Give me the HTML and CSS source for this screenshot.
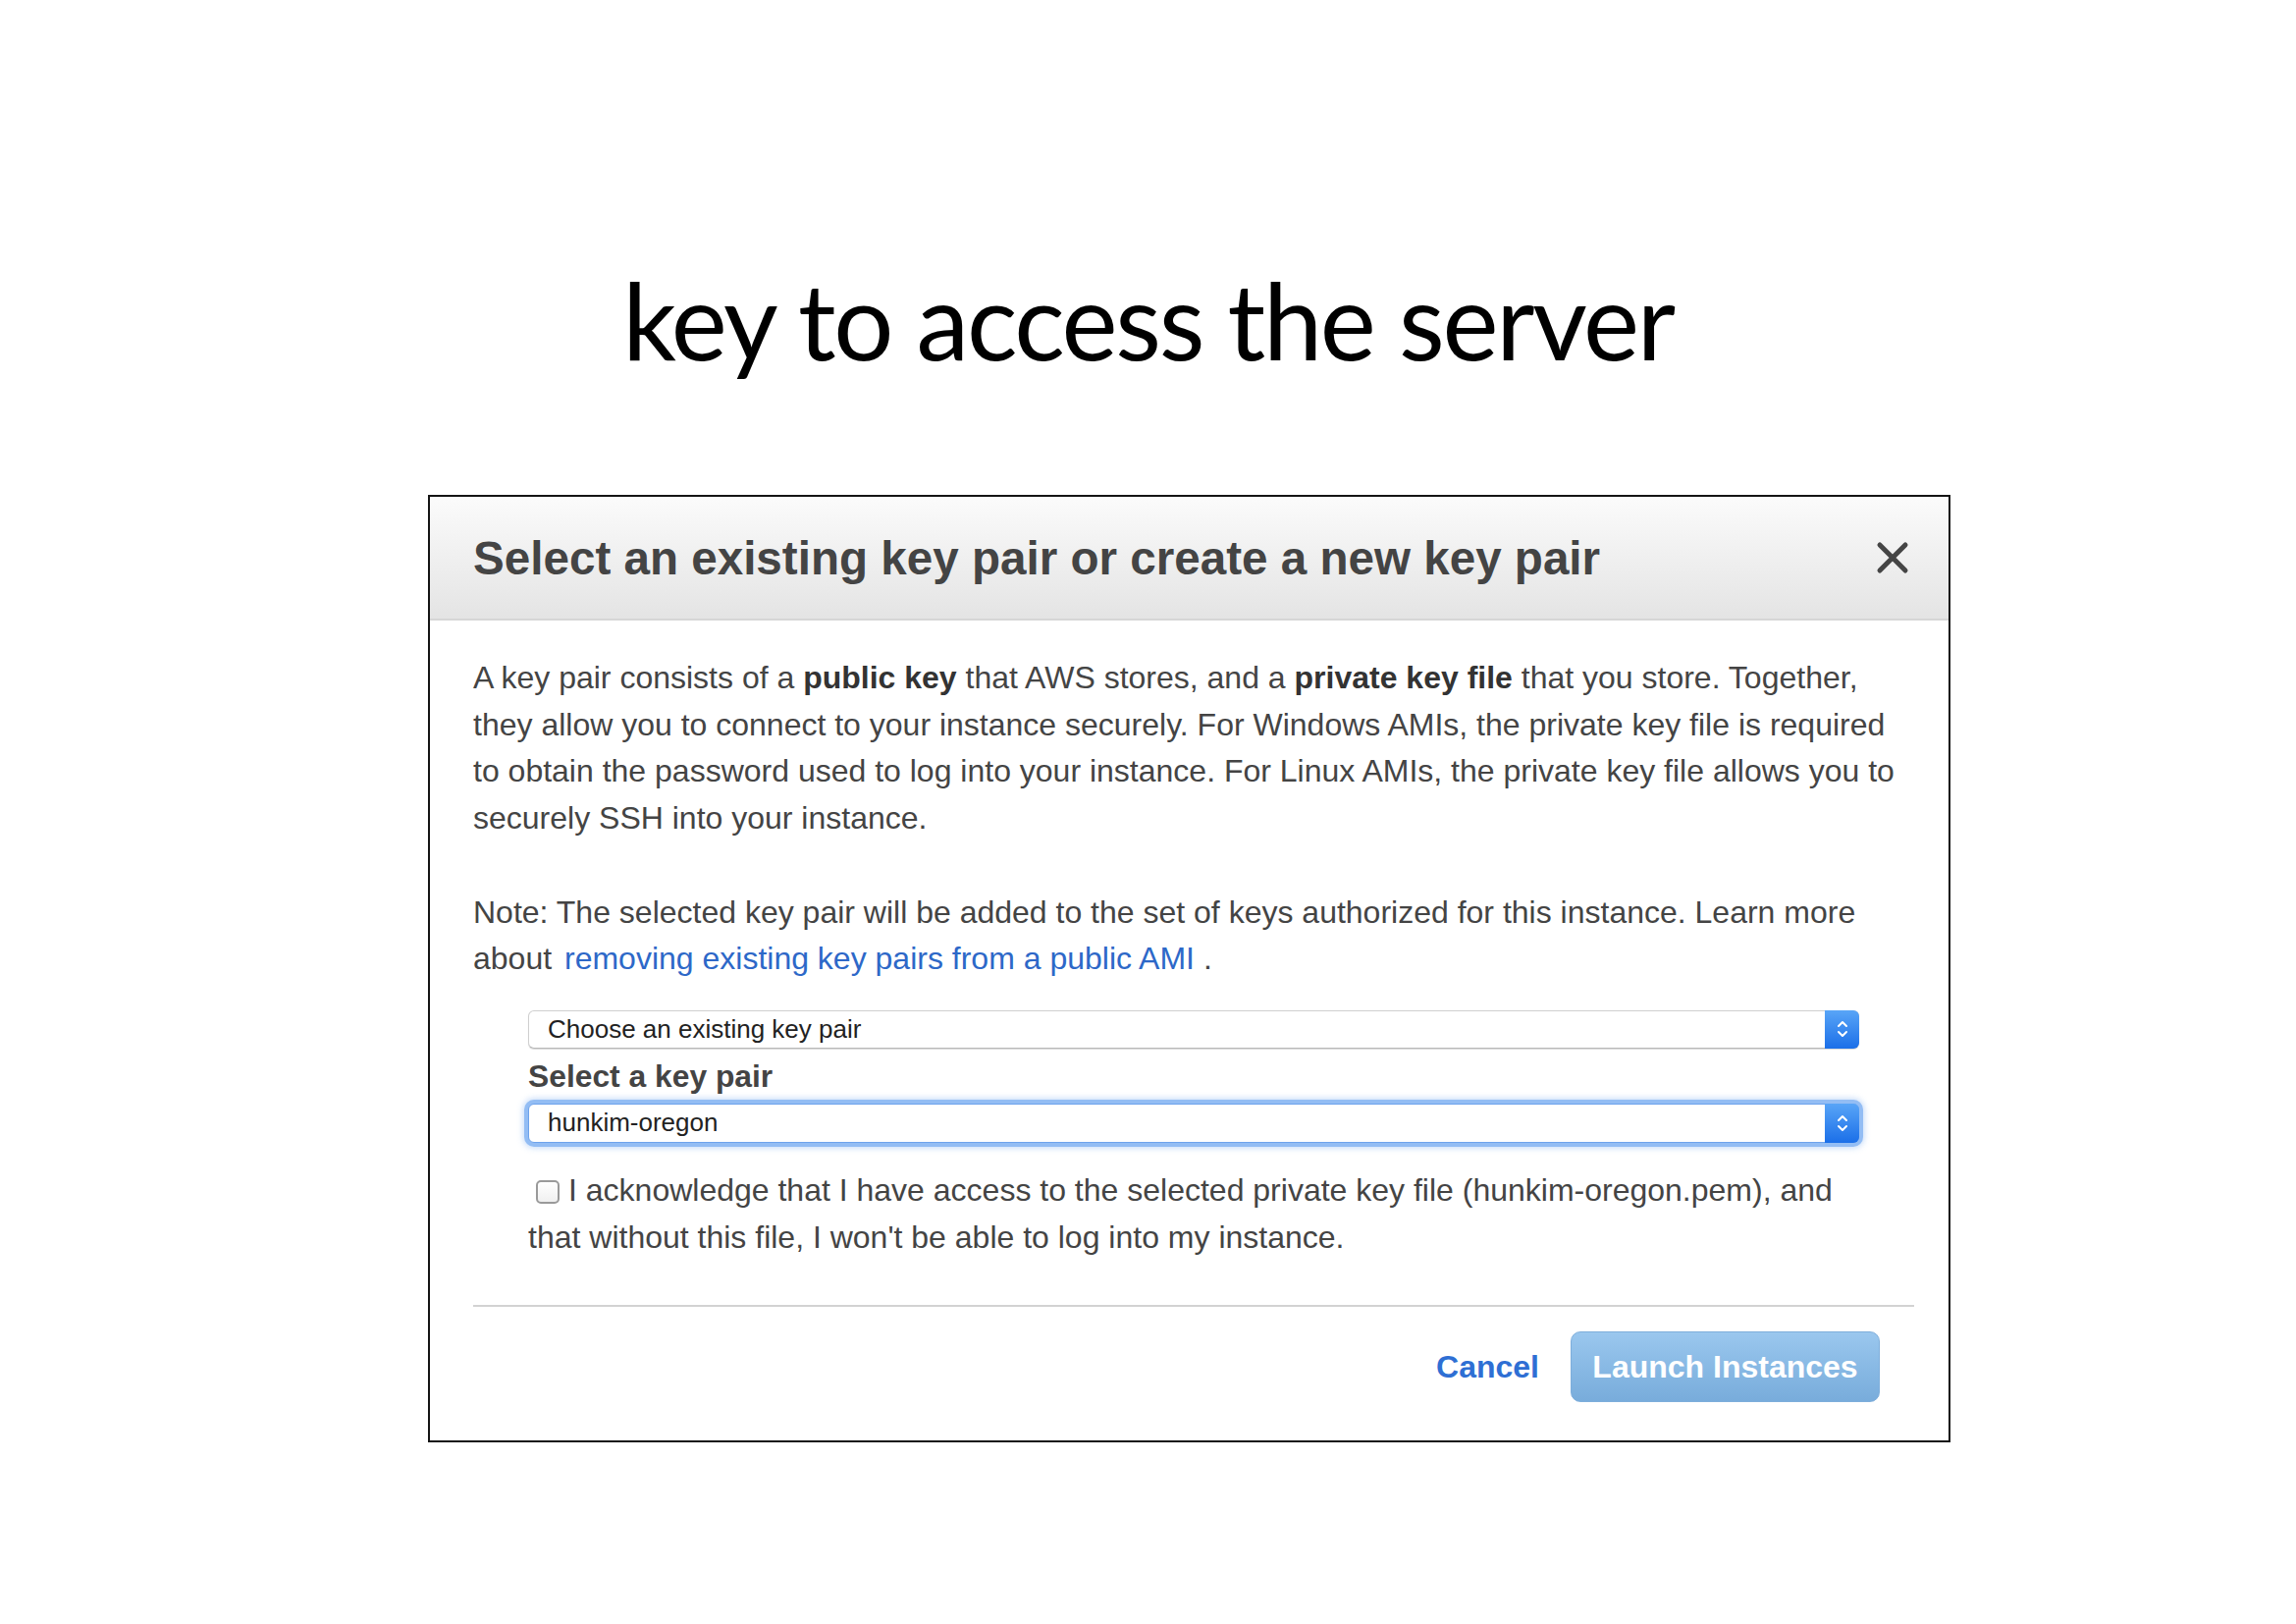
FILE: index.html
```html
<!DOCTYPE html>
<html lang="en">
<head>
<meta charset="utf-8">
<title>key to access the server</title>
<link rel="stylesheet" href="styles.css">
</head>
<body>
<h1 class="slide-title">key to access the server</h1>
<div class="dialog">
  <div class="dialog-header">
    <h2 class="dialog-title">Select an existing key pair or create a new key pair</h2>
    <span class="close" aria-label="Close">
      <svg viewBox="0 0 34 34" width="34" height="34"><path d="M4 4 L30 30 M30 4 L4 30" stroke="#454545" stroke-width="5" stroke-linecap="round" fill="none"/></svg>
    </span>
  </div>
  <div class="dialog-body">
    <p class="text">A key pair consists of a <b>public key</b> that AWS stores, and a <b>private key file</b> that you store. Together,<br>they allow you to connect to your instance securely. For Windows AMIs, the private key file is required<br>to obtain the password used to log into your instance. For Linux AMIs, the private key file allows you to<br>securely SSH into your instance.</p>
    <p class="text note">Note: The selected key pair will be added to the set of keys authorized for this instance. Learn more<br>about <a class="link" href="#">removing existing key pairs from a public AMI</a> .</p>
    <div class="form">
      <div class="select">
        <span class="select-value">Choose an existing key pair</span>
        <span class="select-arrows"><svg viewBox="0 0 14 24" width="14" height="24"><path d="M3 9 L7 5 L11 9 M3 15 L7 19 L11 15" stroke="#fff" stroke-width="2" fill="none" stroke-linecap="round" stroke-linejoin="round"/></svg></span>
      </div>
      <div class="field-label">Select a key pair</div>
      <div class="select focused">
        <span class="select-value">hunkim-oregon</span>
        <span class="select-arrows"><svg viewBox="0 0 14 24" width="14" height="24"><path d="M3 9 L7 5 L11 9 M3 15 L7 19 L11 15" stroke="#fff" stroke-width="2" fill="none" stroke-linecap="round" stroke-linejoin="round"/></svg></span>
      </div>
      <p class="text ack"><span class="checkbox"></span>I acknowledge that I have access to the selected private key file (hunkim-oregon.pem), and<br>that without this file, I won't be able to log into my instance.</p>
    </div>
    <hr class="divider">
    <div class="footer">
      <a class="cancel" href="#">Cancel</a>
      <button class="launch" type="button">Launch Instances</button>
    </div>
  </div>
</div>
</body>
</html>
```
FILE: styles.css
```css
html, body {
  margin: 0;
  padding: 0;
  background: #ffffff;
}
body {
  width: 2339px;
  height: 1654px;
  overflow: hidden;
}
.slide-title {
  margin: 260px 0 0 0;
  font-family: "Lato", "Open Sans", sans-serif;
  font-weight: 400;
  font-size: 108px;
  line-height: 130px;
  height: 130px;
  letter-spacing: -2.3px;
  text-align: center;
  color: #000;
}
.dialog {
  box-sizing: border-box;
  width: 1551px;
  height: 965px;
  margin: 114px 0 0 436px;
  border: 2px solid #141414;
  background: #fff;
  font-family: "Liberation Sans", Arial, sans-serif;
}
.dialog-header {
  box-sizing: border-box;
  height: 126px;
  display: flex;
  align-items: center;
  justify-content: space-between;
  padding: 0 40px 0 44px;
  background: linear-gradient(#fbfbfb, #e4e4e4);
  border-bottom: 2px solid #d6d6d6;
}
.dialog-title {
  margin: 0;
  font-size: 47.6px;
  font-weight: 700;
  color: #444;
  letter-spacing: 0;
}
.close {
  display: flex;
  width: 34px;
  height: 34px;
}
.dialog-body {
  padding: 35px 35px 0 44px;
}
.text {
  margin: 0;
  font-size: 32px;
  line-height: 47.7px;
  color: #444;
}
.text b {
  color: #333;
}
.note {
  margin-top: 47.7px;
}
.link {
  color: #2d68c8;
  text-decoration: none;
  margin-left: 4px;
}
.form {
  margin: 28px 56px 0 56px;
}
.select {
  box-sizing: border-box;
  height: 39px;
  display: flex;
  align-items: center;
  justify-content: space-between;
  border: 1px solid #cfcfcf;
  border-bottom-color: #b8b8b8;
  border-radius: 6px;
  background: #fff;
  box-shadow: 0 1px 1px rgba(0,0,0,0.15);
}
.select-value {
  padding-left: 19px;
  font-size: 26px;
  color: #222;
}
.select-arrows {
  align-self: stretch;
  width: 35px;
  margin: -1px -1px -1px 0;
  display: flex;
  align-items: center;
  justify-content: center;
  border-radius: 0 6px 6px 0;
  background: linear-gradient(#59a5f7, #1b6fe8);
}
.field-label {
  margin-top: 8px;
  height: 40px;
  line-height: 40px;
  font-size: 31.8px;
  font-weight: 700;
  color: #444;
}
.select.focused {
  margin-top: 8px;
  height: 40px;
  border-color: #6ea3ec;
  box-shadow: 0 0 0 4px #93bdf4, 0 0 6px 5px rgba(120,170,240,0.45);
}
.ack {
  margin-top: 25px;
}
.checkbox {
  display: inline-block;
  box-sizing: border-box;
  width: 24px;
  height: 24px;
  margin: 0 9px 0 8px;
  vertical-align: -3px;
  border: 2px solid #9a9a9a;
  border-radius: 5px;
  background: linear-gradient(#ffffff, #f0f0f0);
}
.divider {
  margin: 45px 0 0 0;
  border: 0;
  height: 2px;
  background: #d2d2d2;
}
.footer {
  display: flex;
  justify-content: flex-end;
  align-items: center;
  gap: 32px;
  padding: 25px 35px 0 0;
}
.cancel {
  font-size: 32px;
  font-weight: 700;
  color: #2e6fd4;
  text-decoration: none;
}
.launch {
  box-sizing: border-box;
  width: 315px;
  height: 72px;
  padding: 0;
  font-family: "Liberation Sans", Arial, sans-serif;
  font-size: 32px;
  font-weight: 700;
  color: #fff;
  border: 1px solid #7eaedb;
  border-radius: 10px;
  background: linear-gradient(#9ac7ee, #78acdb);
}
```
